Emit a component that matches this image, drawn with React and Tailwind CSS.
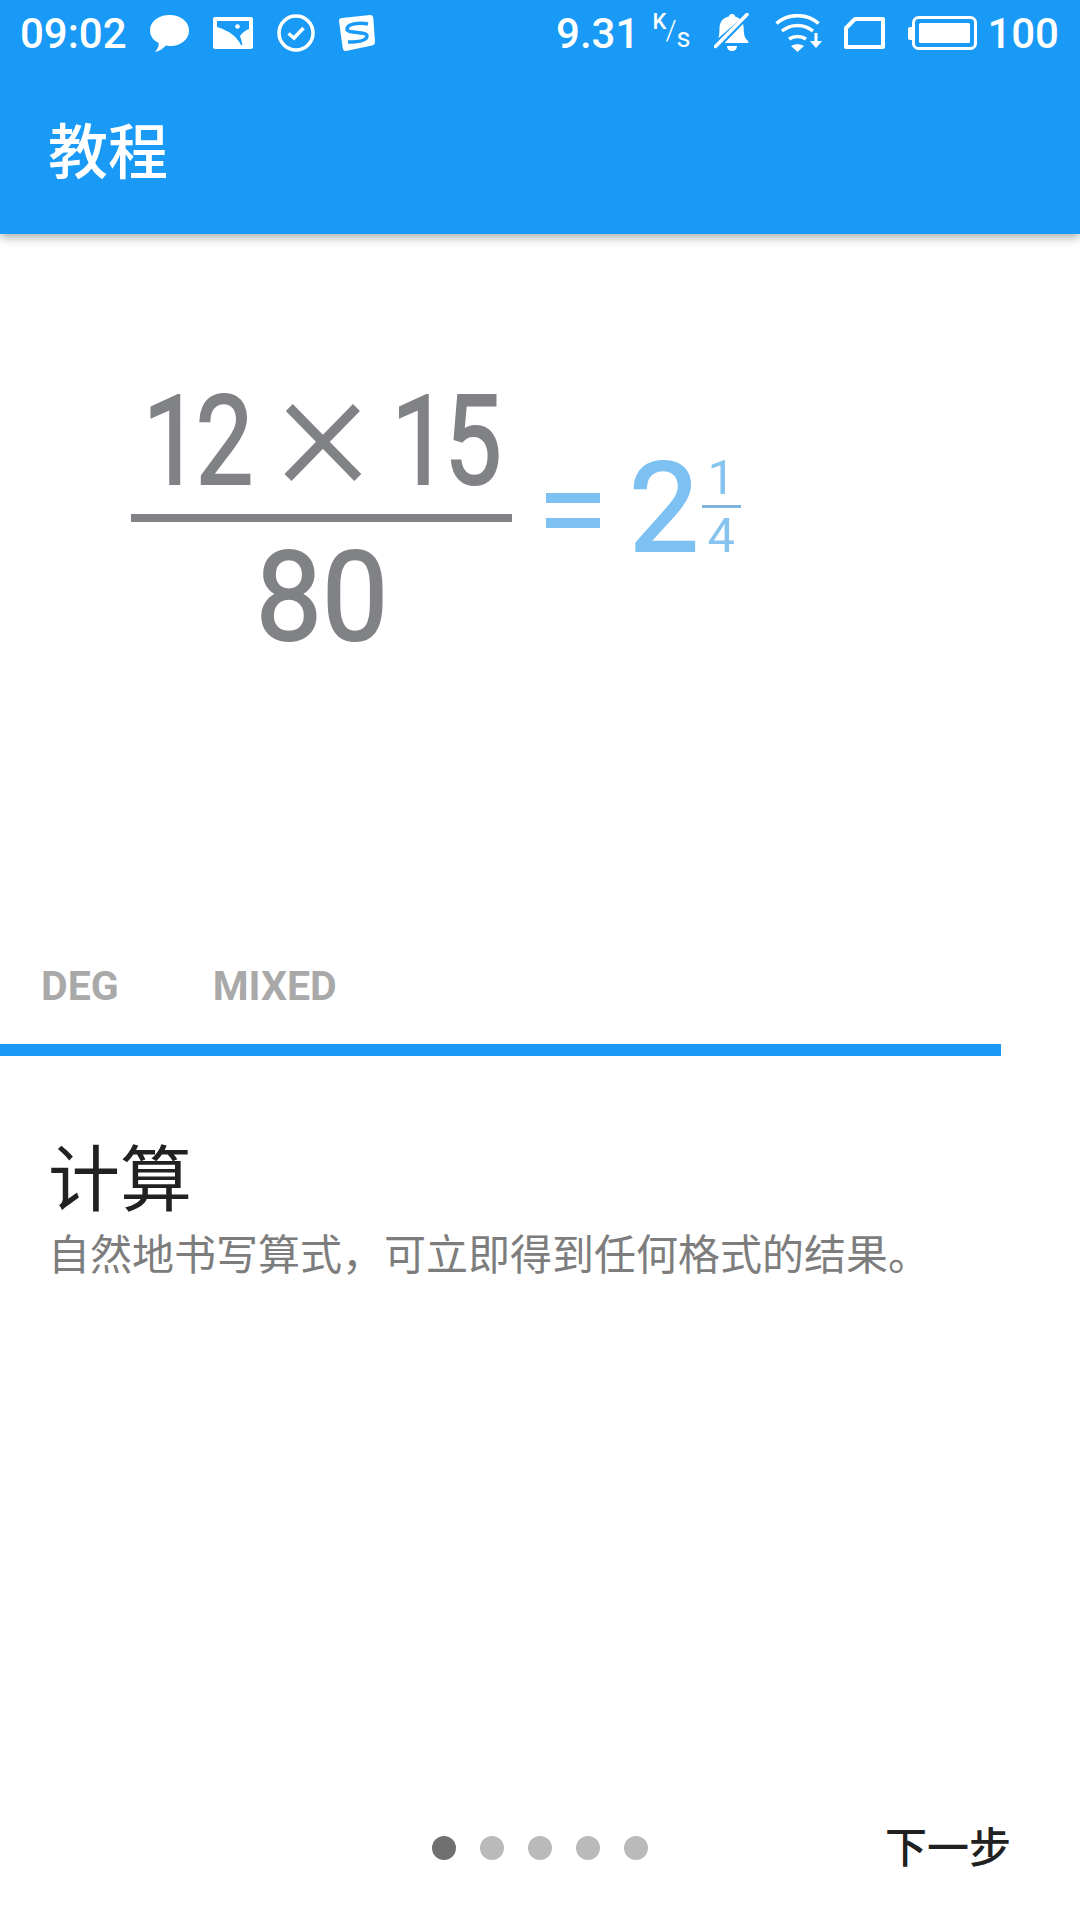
const cjk = "font-['Noto_Sans_CJK_SC','Noto_Sans',sans-serif]";
const rb = "font-['Roboto','Noto_Sans_CJK_SC',sans-serif]";

const Chat = () => (
  <svg width="39" height="37" viewBox="0 0 39 37" className="ml-[23px]"><path fill="#fff" d="M19.500 0C30 0 39 6 39 15.500S30 31 21 31c-2 0-3.500-.2-5-.6C13 33 10 36 5 37c2-2.500 3.600-5 3.800-8.800C3.500 25.500 0 21 0 15.500 0 6 9 0 19.500 0Z"/></svg>
);
const Photo = () => (
  <svg width="40" height="32" viewBox="0 0 40 32" className="ml-[24px]"><rect width="40" height="32" rx="2" fill="#fff"/><path fill="#1a9af7" d="M4 4h32v8c-3 1-6 3-9 7 1 3 2 6 2.500 9h-1.500C24 20 17 14 4 10Z"/><circle cx="24.500" cy="9.500" r="2.300" fill="#fff"/></svg>
);
const Check = () => (
  <svg width="38" height="38" viewBox="0 0 38 38" className="ml-[24px]" fill="none" stroke="#fff"><circle cx="19" cy="19" r="17" strokeWidth="3.500"/><path d="M11.500 19.500 17 24l9.500-10" strokeWidth="3.500"/></svg>
);
const Sogou = () => (
  <svg width="36" height="36" viewBox="0 0 36 36" className="ml-[24px]"><path fill="#fff" d="M3 3 31 0c2 0 3 1 3.300 3L36 27c0 2-1 3-3 3.500L7 36c-2 0-3-1-3.300-3L0 6c0-2 1-3 3-3Z"/><path fill="none" stroke="#1a9af7" strokeWidth="3.500" d="M29 9C20 7 8 9 8 14c0 5 20 2 20 7 0 5-11 6-19 6"/></svg>
);
const Bell = () => (
  <svg width="36" height="40" viewBox="0 0 36 40"><path fill="#fff" d="M18 1c2 0 3 1 3 2.500 2 .6 4 1.700 5 3L4.500 25c.6-3 1-5 1-10C5.500 8 10 4.500 15 3.500 15 2 16 1 18 1Z"/><path fill="#fff" d="M29 11c.5 1.500.7 3 .7 5 0 6 1.300 9 3.300 11 1 1 1.500 2 1.500 3H10.500Z"/><path fill="#fff" d="M13 33h10c0 3-2 5-5 5s-5-2-5-5Z"/><path stroke="#fff" strokeWidth="3.500" strokeLinecap="round" d="M1.500 33.500 33 1.500"/></svg>
);
const Wifi = () => (
  <svg width="48" height="38" viewBox="0 0 48 38" className="ml-[25px]" fill="none" stroke="#fff" strokeWidth="3.500"><path d="M1.500 9.500C13-1 32-1 43.500 9.500"/><path d="M7 17c9-7.500 22-7.500 31 0"/><path d="M14 25c5-3.500 12-3.500 17 0"/><path fill="#fff" stroke="none" d="M22.500 38 16 32c4-2.500 9-2.500 13 0Z"/><path strokeWidth="3" d="M41 19v10"/><path fill="#fff" stroke="none" d="M35 27h12l-6 7Z"/></svg>
);
const Sim = () => (
  <svg width="41" height="32" viewBox="0 0 41 32" className="ml-[21px]" fill="none"><path stroke="#fff" strokeWidth="4" strokeLinejoin="round" d="M11 2h28v28H2V11Z"/></svg>
);
const Battery = () => (
  <svg width="69" height="34" viewBox="0 0 69 34" className="ml-[23px]"><rect x="0" y="11" width="6" height="13" rx="2" fill="#fff"/><rect x="5.500" y="1.500" width="62" height="31" rx="5" fill="none" stroke="#fff" strokeWidth="3"/><rect x="11" y="7" width="51" height="20" rx="1.500" fill="#fff"/></svg>
);

const Dot = ({ active }) => (
  <span className={active ? "w-6 h-6 rounded-full bg-[#707070]" : "w-6 h-6 rounded-full bg-[#bababa]"} />
);

export default function App() {
  return (
    <div className={`w-[1080px] h-[1920px] bg-white flex flex-col overflow-hidden ${rb}`}>
      <header className="h-[234px] shrink-0 bg-[#1a9af7] text-white shadow-[0_3px_10px_rgba(0,0,0,0.35)] relative z-10">
        <div className="h-[66px] pl-[20px] pr-[21px] flex items-center justify-between">
          <div className="flex items-center">
            <span className="text-[42px] leading-none font-medium translate-y-[1px]">09:02</span>
            <Chat /><Photo /><Check /><Sogou />
          </div>
          <div className="flex items-center">
            <span className="text-[42px] leading-none font-medium translate-y-[1px]">9.31</span>
            <div className="relative w-[75px] h-[50px]">
              <span className="absolute left-[13px] top-[3px] text-[22px] leading-none font-medium">K</span>
              <span className="absolute left-[26px] top-[9px] text-[28px] leading-none font-light">/</span>
              <span className="absolute left-[37px] top-[17px] text-[27px] leading-none">s</span>
            </div>
            <Bell /><Wifi /><Sim /><Battery />
            <span className="ml-[10px] text-[42px] leading-none font-medium translate-y-[1px]">100</span>
          </div>
        </div>
        <h1 className={`pl-[48px] mt-[40px] text-[60px] leading-[84px] font-medium ${cjk}`}>教程</h1>
      </header>

      <main className="h-[810px] shrink-0 flex flex-col">
        <div className="h-[695px] pl-[131px] flex items-start pt-[142px]">
          <div className="w-[381px] flex flex-col items-stretch text-[#808285]">
            <div className="h-[138px] flex items-center text-[124px] leading-none">
              <span className="w-[105px] ml-[12px] flex justify-center scale-x-[0.83] tracking-[-6px] translate-y-[-3px] [-webkit-text-stroke:2px_#808285]">12</span>
              <span className="w-[75px] ml-[38px] flex justify-center text-[180px] font-light translate-y-[-16px]">×</span>
              <span className="w-[102px] ml-[32px] flex justify-center scale-x-[0.83] tracking-[-6px] translate-y-[-3px] [-webkit-text-stroke:2px_#808285]">15</span>
            </div>
            <div className="h-[8px] bg-[#808285]" />
            <div className="h-[130px] flex items-center justify-center text-[124px] leading-none">
              <span className="w-[124px] flex justify-center scale-x-[0.95] translate-y-[11px] [-webkit-text-stroke:2px_#808285]">80</span>
            </div>
          </div>
          <div className="flex items-start text-[#7cc1f2] mt-[70px]">
            <div className="ml-[34px] mt-[47px] flex flex-col gap-[15px]">
              <span className="block w-[54px] h-[10px] bg-[#7cc1f2]" />
              <span className="block w-[54px] h-[10px] bg-[#7cc1f2]" />
            </div>
            <span className="ml-[29px] mt-[3px] text-[124px] leading-[120px] [-webkit-text-stroke:2px_#7cc1f2]">2</span>
            <div className="ml-[3px] flex flex-col items-center w-[39px] mt-[7px] text-[#86c3ee]">
              <span className="text-[49px] leading-[50px]">1</span>
              <span className="block w-full h-[3px] bg-[#7fb5dd] mt-[2px] mb-[3px]" />
              <span className="text-[49px] leading-[50px]">4</span>
            </div>
          </div>
        </div>
        <div className="flex items-center text-[#a9a9a9] text-[41px] font-bold leading-none h-[115px]">
          <span className="ml-[41px]">DEG</span>
          <span className="ml-[94px]">MIXED</span>
        </div>
      </main>

      <div className="w-[1001px] h-[12px] shrink-0 bg-[#1a9af7]" />

      <section className={`pl-[48px] pt-[76px] ${cjk}`}>
        <h2 className="text-[72px] leading-[84px] text-[#212121] font-normal">计算</h2>
        <p className="text-[42px] leading-[56px] text-[#7d7d7d] mt-[8px] whitespace-nowrap">自然地书写算式，可立即得到任何格式的结果。</p>
      </section>

      <footer className="mt-auto h-[144px] shrink-0 relative flex items-start justify-center">
        <div className="flex gap-6 mt-[60px]">
          <Dot active /><Dot /><Dot /><Dot /><Dot />
        </div>
        <span className={`absolute right-[69px] top-[45px] text-[42px] leading-[48px] text-[#212121] font-medium ${cjk}`}>下一步</span>
      </footer>
    </div>
  );
}
